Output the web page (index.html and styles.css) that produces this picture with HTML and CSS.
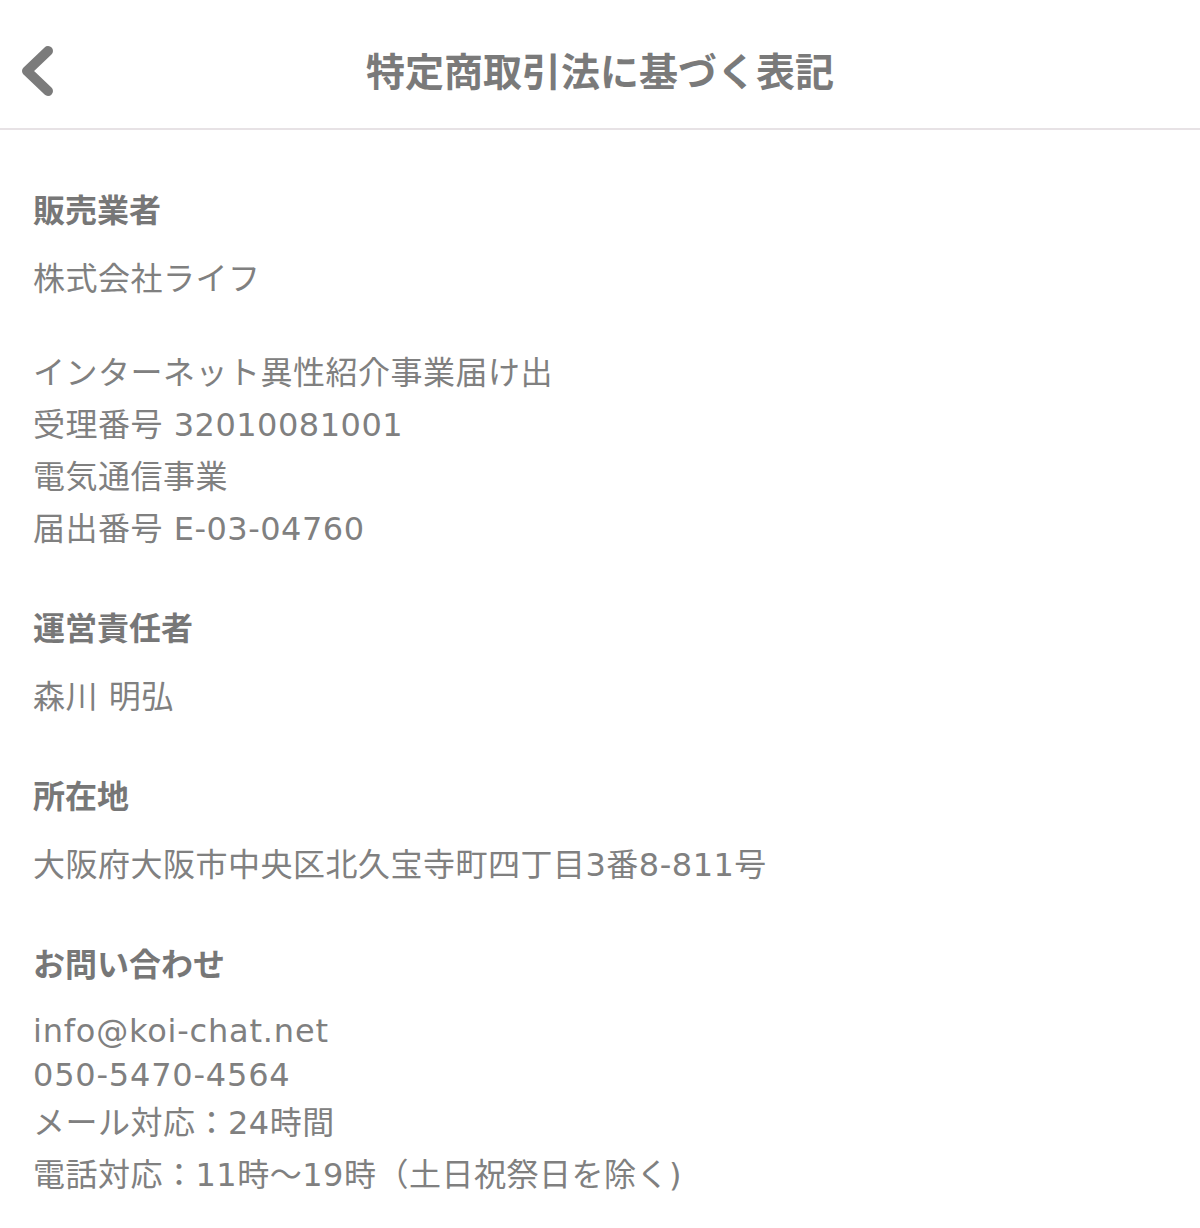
FILE: index.html
```html
<!DOCTYPE html>
<html lang="ja">
<head>
<meta charset="utf-8">
<title>特定商取引法に基づく表記</title>
<link rel="stylesheet" href="styles.css">
</head>
<body>
<header class="topbar">
  <a class="back" href="#" aria-label="戻る">
    <svg width="34" height="50" viewBox="0 0 34 50"><path d="M29 5 L8 25 L29 45" fill="none" stroke="#7b7b7b" stroke-width="10" stroke-linecap="round" stroke-linejoin="round"/></svg>
  </a>
  <h1 class="title">特定商取引法に基づく表記</h1>
</header>
<main class="content">
  <section class="sec">
    <h2 class="label">販売業者</h2>
    <p class="val">株式会社ライフ</p>
    <p class="val para">インターネット異性紹介事業届け出<br>受理番号 32010081001<br>電気通信事業<br>届出番号 E-03-04760</p>
  </section>
  <section class="sec">
    <h2 class="label">運営責任者</h2>
    <p class="val">森川 明弘</p>
  </section>
  <section class="sec">
    <h2 class="label">所在地</h2>
    <p class="val">大阪府大阪市中央区北久宝寺町四丁目3番8-811号</p>
  </section>
  <section class="sec">
    <h2 class="label">お問い合わせ</h2>
    <div class="val contact">
      <div class="latin">info@koi-chat.net</div>
      <div class="latin">050-5470-4564</div>
      <div>メール対応：24時間</div>
      <div>電話対応：11時〜19時（土日祝祭日を除く)</div>
    </div>
  </section>
</main>
</body>
</html>
```

FILE: styles.css
```css
html, body {
  margin: 0;
  padding: 0;
  background: #ffffff;
}
body {
  font-family: "DejaVu Sans", "Noto Sans CJK JP", sans-serif;
  color: #808080;
  width: 1200px;
}
.topbar {
  position: relative;
  height: 128px;
  border-bottom: 2px solid #e7e2e5;
  display: flex;
  align-items: center;
  justify-content: center;
}
.back {
  position: absolute;
  left: 19px;
  top: 46px;
  display: block;
  width: 34px;
  height: 50px;
}
.back svg {
  display: block;
}
.title {
  margin: 0;
  font-family: "Noto Sans CJK JP", sans-serif;
  font-size: 39px;
  font-weight: 700;
  color: #7a7a7a;
  line-height: 52px;
  padding-top: 9px;
}
.content {
  padding: 52px 33px 0 33px;
}
.sec + .sec {
  margin-top: 45px;
}
.label {
  margin: 0;
  font-family: "Noto Sans CJK JP", sans-serif;
  font-size: 32px;
  font-weight: 700;
  line-height: 52px;
  color: #777777;
}
.val {
  margin: 19px 0 0 0;
  font-size: 32px;
  font-weight: 400;
  line-height: 52px;
  letter-spacing: 0.5px;
}
.val.para {
  margin-top: 42px;
}
.val.contact {
  margin-top: 21px;
}
.latin {
  line-height: 44px;
  letter-spacing: 0.8px;
}
```
